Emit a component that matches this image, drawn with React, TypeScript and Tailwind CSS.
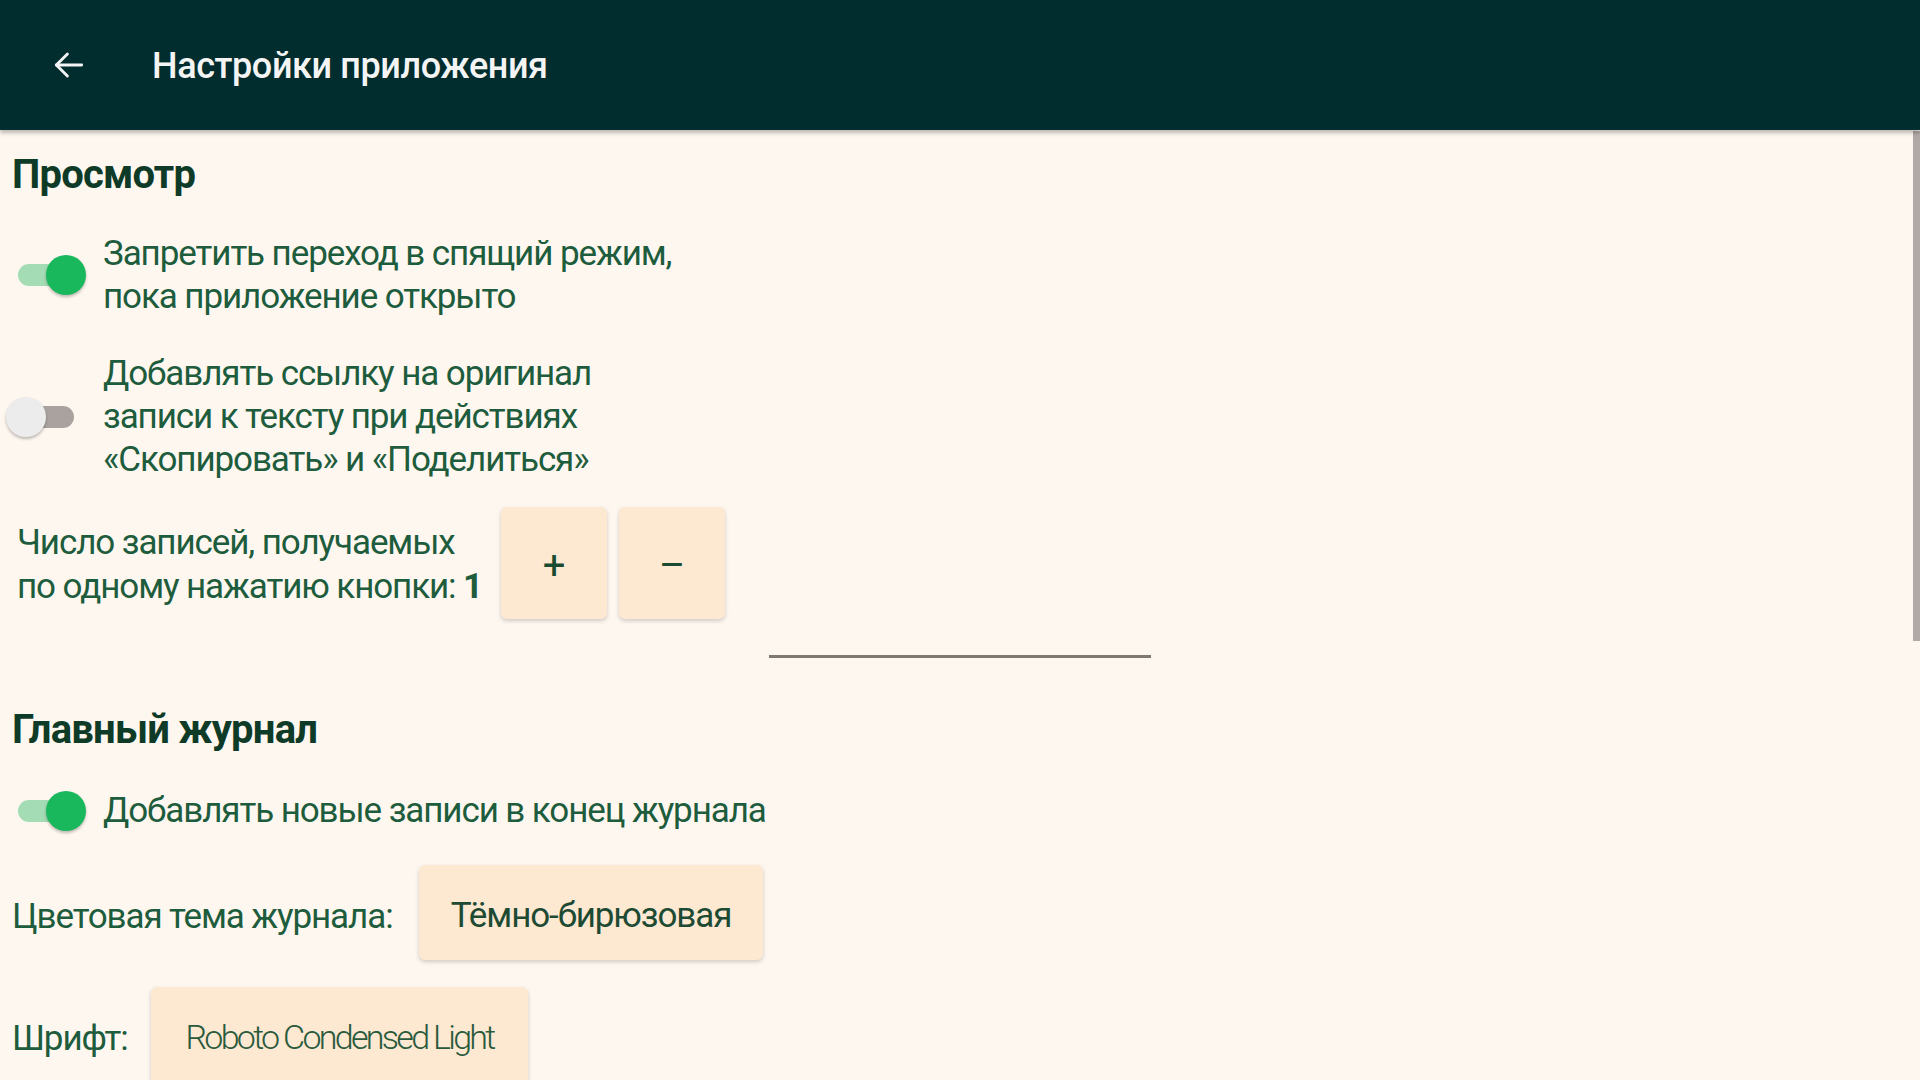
import React from "react";

const font = { fontFamily: "Roboto, 'Noto Sans', sans-serif" };

function Toggle({ on }: { on: boolean }) {
  return (
    <div className="relative w-[80px] h-[40px] shrink-0">
      <div
        className={
          "absolute left-[12px] right-[12px] top-[9px] h-[22px] rounded-full " +
          (on ? "bg-[#a3dcb5]" : "bg-[#aaa29e]")
        }
      />
      <div
        className={
          "absolute top-0 w-[40px] h-[40px] rounded-full shadow-[0_2px_3px_rgba(0,0,0,0.25)] " +
          (on ? "right-0 bg-[#19b85c]" : "left-0 bg-[#ececec]")
        }
      />
    </div>
  );
}

function PeachButton({ children, className }: { children: React.ReactNode; className: string }) {
  return (
    <div
      className={
        "flex items-center justify-center rounded-[6px] bg-[#fde8d2] shadow-[0_2px_4px_rgba(0,0,0,0.18)] " +
        className
      }
    >
      {children}
    </div>
  );
}

export default function App() {
  return (
    <div className="w-[1920px] h-[1080px] overflow-hidden bg-[#fef7f0] relative" style={font}>
      {/* Header */}
      <div className="h-[130px] bg-[#012d2e] flex items-center shadow-[0_3px_4px_rgba(0,0,0,0.25)] relative z-10">
        <div className="w-[152px] flex items-center pl-[50px]">
          <svg width="38" height="38" viewBox="0 0 24 24" fill="none" stroke="#f4f4f4" strokeWidth="1.8" strokeLinecap="round" strokeLinejoin="round">
            <path d="M20 12H4" />
            <path d="M11 5l-7 7 7 7" />
          </svg>
        </div>
        <div className="text-[#f4f4f4] text-[36px] font-medium tracking-[-0.4px] mt-[2px]">Настройки приложения</div>
      </div>

      {/* Scrollbar */}
      <div className="absolute right-0 top-[131px] w-[7px] h-[510px] bg-[#b1a9a5]" />

      {/* Content */}
      <div className="flex flex-col text-[#1d5c3c]">
        <div className="pl-[12px] mt-[23px] h-[44px] leading-[44px] text-[40px] font-bold text-[#0e3b27] tracking-[-0.8px]">
          Просмотр
        </div>

        <div className="flex items-center mt-[35px] pl-[6px]">
          <Toggle on={true} />
          <div className="ml-[17px] text-[35px] leading-[43px] tracking-[-1.1px]">
            Запретить переход в спящий режим,
            <br />
            пока приложение открыто
          </div>
        </div>

        <div className="flex items-center mt-[34px] pl-[6px]">
          <Toggle on={false} />
          <div className="ml-[17px] text-[35px] leading-[43px] tracking-[-1.1px]">
            Добавлять ссылку на оригинал
            <br />
            записи к тексту при действиях
            <br />
            «Скопировать» и «Поделиться»
          </div>
        </div>

        <div className="flex items-center mt-[26px] pl-[17px]">
          <div className="text-[35px] leading-[44px] tracking-[-1.1px] w-[484px] mt-[4px]">
            Число записей, получаемых
            <br />
            по одному нажатию кнопки: <span className="font-bold">1</span>
          </div>
          <div className="flex gap-[12px]">
            <PeachButton className="w-[106px] h-[112px]">
              <span className="text-[40px] text-[#1a4a30] leading-none mt-[6px]">+</span>
            </PeachButton>
            <PeachButton className="w-[106px] h-[112px]">
              <span className="text-[40px] text-[#1a4a30] leading-none mt-[6px]">–</span>
            </PeachButton>
          </div>
        </div>

        <div className="pl-[769px] mt-[36px]">
          <div className="w-[382px] h-[3px] bg-[#7d7972]" />
        </div>

        <div className="pl-[12px] mt-[50px] h-[44px] leading-[44px] text-[40px] font-bold text-[#0e3b27] tracking-[-0.8px]">
          Главный журнал
        </div>

        <div className="flex items-center mt-[37px] pl-[6px]">
          <Toggle on={true} />
          <div className="ml-[17px] text-[35px] leading-[43px] tracking-[-1.1px]">
            Добавлять новые записи в конец журнала
          </div>
        </div>

        <div className="flex items-center mt-[33px] pl-[12px]">
          <div className="text-[35px] leading-[43px] tracking-[-1.1px] w-[407px] mt-[7px]">Цветовая тема журнала:</div>
          <PeachButton className="w-[344px] h-[95px]">
            <span className="text-[35px] tracking-[-1.1px] text-[#1d4a32] mt-[8px]">Тёмно-бирюзовая</span>
          </PeachButton>
        </div>

        <div className="flex items-center mt-[27px] pl-[12px]">
          <div className="text-[35px] leading-[43px] tracking-[-1.1px] w-[139px] mt-[2px]">Шрифт:</div>
          <PeachButton className="w-[377px] h-[100px]">
            <span className="text-[34px] font-light tracking-[-2.7px] text-[#2a5a3c]">Roboto Condensed Light</span>
          </PeachButton>
        </div>
      </div>
    </div>
  );
}
